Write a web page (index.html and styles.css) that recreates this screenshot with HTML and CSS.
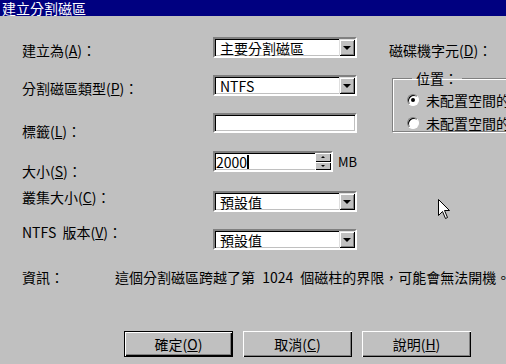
FILE: index.html
```html
<!DOCTYPE html>
<html lang="zh-TW">
<head>
  <meta charset="UTF-8">
  <title>建立分割磁區</title>
  <link rel="stylesheet" href="styles.css">
</head>
<body>
  <div class="window">
    <div class="titlebar">建立分割磁區</div>

    <div class="main">
      <div class="labels">
        <div class="lbl l1">建立為(<u>A</u>)：</div>
        <div class="lbl l2">分割磁區類型(<u>P</u>)：</div>
        <div class="lbl l3">標籤(<u>L</u>)：</div>
        <div class="lbl l4">大小(<u>S</u>)：</div>
        <div class="lbl l5">叢集大小(<u>C</u>)：</div>
        <div class="lbl l6">NTFS&nbsp; 版本(<u>V</u>)：</div>
      </div>

      <div class="controls">
        <div class="field c1"><span class="val">主要分割磁區</span><span class="drop"></span></div>
        <div class="field c2"><span class="val">NTFS</span><span class="drop"></span></div>
        <div class="field c3 text"></div>
        <div class="spinrow c4">
          <div class="field spin">
            <span class="val num">2000</span><span class="caret"></span>
            <span class="spinbtns"><span class="sb up"></span><span class="sb down"></span></span>
          </div>
          <span class="unit">MB</span>
        </div>
        <div class="field c5"><span class="val">預設值</span><span class="drop"></span></div>
        <div class="field c6"><span class="val">預設值</span><span class="drop"></span></div>
      </div>

      <div class="right">
        <div class="lbl r1">磁碟機字元(<u>D</u>)：</div>
        <fieldset class="group">
          <legend>位置：</legend>
          <div class="radio on"><span class="dot"></span>未配置空間的</div>
          <div class="radio"><span class="dot"></span>未配置空間的</div>
        </fieldset>
      </div>
    </div>

    <div class="info">
      <div class="info-lbl">資訊：</div>
      <div class="info-txt">這個分割磁區跨越了第 1024 個磁柱的界限，可能會無法開機。</div>
    </div>

    <div class="buttons">
      <div class="btn default">確定(<u>O</u>)</div>
      <div class="btn">取消(<u>C</u>)</div>
      <div class="btn">說明(<u>H</u>)</div>
    </div>

    <svg class="cursor" width="13" height="21" viewBox="0 0 13 21">
      <path d="M0.5 0.5 L0.5 16.5 L4.5 12.5 L7.5 19.5 L9.5 18.5 L6.5 11.5 L11.5 11.5 Z" fill="#fff" stroke="#000" stroke-width="1"/>
    </svg>
  </div>
</body>
</html>
```

FILE: styles.css
```css
html, body {
  margin: 0;
  padding: 0;
  overflow: hidden;
}

body {
  width: 506px;
  height: 364px;
  background: #c0c0c0;
  font-family: "Noto Sans CJK TC", "Noto Sans", sans-serif;
  font-size: 14px;
  line-height: 16px;
  color: #000;
}

u {
  text-decoration: underline;
  text-underline-offset: 1px;
}

.window {
  position: relative;
  width: 506px;
  height: 364px;
}

.titlebar {
  height: 16px;
  background: #000080;
  color: #fff;
  padding-left: 2px;
  line-height: 16px;
  white-space: nowrap;
}

.main {
  display: flex;
  padding-left: 22px;
}

.labels {
  width: 191px;
  flex: none;
}

.lbl {
  white-space: nowrap;
}

.l1 { margin-top: 26px; }
.l2 { margin-top: 22px; }
.l3 { margin-top: 27px; }
.l4 { margin-top: 24px; }
.l5 { margin-top: 10px; }
.l6 { margin-top: 19px; }

.controls {
  width: 144px;
  flex: none;
  display: flex;
  flex-direction: column;
}

.field {
  box-sizing: border-box;
  width: 144px;
  height: 21px;
  background: #fff;
  border: 2px solid;
  border-color: #808080 #fff #fff #808080;
  box-shadow: inset 1px 1px #000, inset -1px -1px #c0c0c0;
  display: flex;
  align-items: center;
  white-space: nowrap;
}

.field .val {
  padding-left: 5px;
  flex: 1;
}

.c1 { margin-top: 21px; }
.c2 { margin-top: 17px; }
.c3 { margin-top: 17px; height: 20px; }
.c4 { margin-top: 18px; }
.c5 { margin-top: 19px; }
.c6 { margin-top: 17px; }

.drop {
  position: relative;
  flex: none;
  width: 16px;
  height: 17px;
  background: #c0c0c0;
  box-shadow: inset 1px 1px #dfdfdf, inset -1px -1px #000, inset 2px 2px #fff, inset -2px -2px #808080;
}

.drop::after {
  content: "";
  position: absolute;
  left: 4px;
  top: 7px;
  border-left: 4px solid transparent;
  border-right: 4px solid transparent;
  border-top: 4px solid #000;
}

.spinrow {
  display: flex;
  align-items: center;
  gap: 5px;
}

.spin .val.num {
  flex: none;
  padding-left: 1px;
}

.caret {
  width: 2px;
  height: 14px;
  background: #000;
}

.spinbtns {
  margin-left: auto;
  display: flex;
  flex-direction: column;
  width: 16px;
  height: 17px;
}

.sb {
  position: relative;
  flex: 1;
  background: #c0c0c0;
  box-shadow: inset 1px 1px #fff, inset -1px -1px #000;
}

.sb.up::after, .sb.down::after {
  content: "";
  position: absolute;
  left: 6px;
  top: 3px;
  border-left: 2px solid transparent;
  border-right: 2px solid transparent;
}

.sb.up::after { border-bottom: 2px solid #000; }
.sb.down::after { border-top: 2px solid #000; }

.unit {
  font-size: 13px;
}

.right {
  margin-left: 32px;
  flex: none;
  width: 200px;
}

.r1 { margin-top: 26px; }

.group {
  margin: 12px 0 0 3px;
  padding: 2px 0 6px 14px;
  width: 200px;
  height: 52px;
  border: 1px solid #808080;
  box-shadow: inset 1px 1px #fff, 1px 1px #fff;
}

.group legend {
  padding: 0 4px;
  margin-left: 5px;
}

.radio {
  display: flex;
  align-items: center;
  gap: 7px;
  height: 23px;
  white-space: nowrap;
}

.dot {
  box-sizing: border-box;
  position: relative;
  width: 12px;
  height: 12px;
  border-radius: 50%;
  background: #fff;
  border: 1px solid;
  border-color: #808080 #fff #fff #808080;
  box-shadow: inset 1px 1px #000;
}

.radio.on .dot::after {
  content: "";
  position: absolute;
  left: 3px;
  top: 3px;
  width: 4px;
  height: 4px;
  border-radius: 50%;
  background: #000;
}

.info {
  display: flex;
  margin-top: 19px;
  padding-left: 22px;
  white-space: nowrap;
}

.info-lbl {
  width: 93px;
  flex: none;
}

.info-txt {
  word-spacing: 4px;
}

.buttons {
  display: flex;
  gap: 10px;
  margin-top: 46px;
  padding-left: 124px;
}

.btn {
  box-sizing: border-box;
  width: 109px;
  height: 26px;
  display: flex;
  align-items: center;
  justify-content: center;
  background: #c0c0c0;
  box-shadow: inset 1px 1px #fff, inset -1px -1px #000, inset -2px -2px #808080;
}

.btn.default {
  border: 1px solid #000;
}

.cursor {
  position: absolute;
  left: 438px;
  top: 199px;
}
```
